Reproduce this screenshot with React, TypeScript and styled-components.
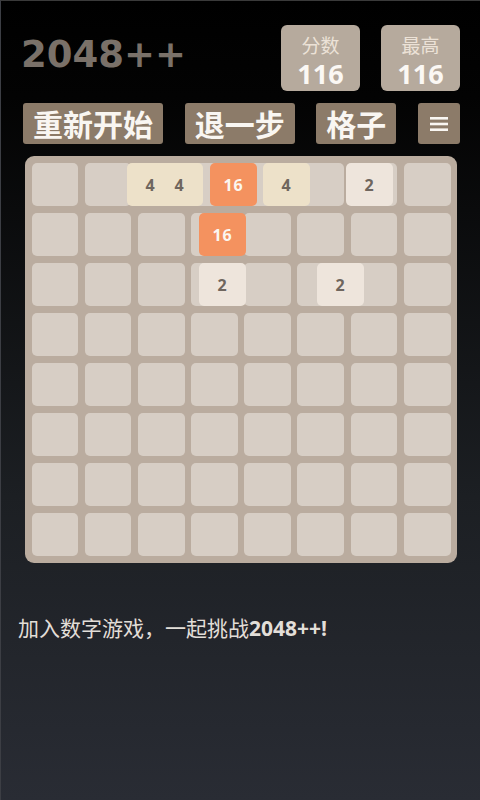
import React from "react";
import styled, { createGlobalStyle } from "styled-components";

const GlobalStyle = createGlobalStyle`
  html, body { margin: 0; padding: 0; }
  body {
    background: #000;
    font-family: "Open Sans", "Noto Sans CJK SC", sans-serif;
  }
`;

const Page = styled.div`
  box-sizing: border-box;
  width: 480px;
  min-height: 800px;
  padding: 24px 20px 0 22px;
  border-top: 1px solid #3a3a3a;
  border-left: 1px solid #3c3e44;
  background: linear-gradient(180deg, #000 0%, #030303 12%, #1c1f23 62%, #292c34 100%);
  display: flex;
  flex-direction: column;
`;

const Header = styled.div`
  display: flex;
  align-items: center;
  justify-content: space-between;
`;

const Title = styled.h1`
  margin: 0 0 0 -2px;
  font-family: "DejaVu Sans", sans-serif;
  font-weight: bold;
  font-size: 37px;
  line-height: 40px;
  color: #7a7169;
  position: relative;
  top: -3px;
`;

const Scores = styled.div`
  display: flex;
  gap: 21px;
`;

const ScoreBox = styled.div`
  width: 79px;
  height: 66px;
  box-sizing: border-box;
  padding-top: 9px;
  border-radius: 6px;
  background: #b6aa9d;
  display: flex;
  flex-direction: column;
  align-items: center;
`;

const ScoreLabel = styled.div`
  font-family: "Noto Sans CJK SC", sans-serif;
  font-size: 19px;
  line-height: 22px;
  color: #ece2d7;
`;

const ScoreValue = styled.div`
  margin-top: 3px;
  font-family: "Open Sans", sans-serif;
  font-weight: 700;
  font-size: 27px;
  line-height: 30px;
  color: #fbf8f4;
`;

const Toolbar = styled.div`
  display: flex;
  justify-content: space-between;
  margin-top: 12px;
`;

const Button = styled.div`
  height: 41px;
  padding: 0 10px;
  box-sizing: border-box;
  border-radius: 3px;
  background: #8c7b69;
  color: #f9f6f2;
  font-family: "Noto Sans CJK SC", sans-serif;
  font-weight: 700;
  font-size: 30px;
  line-height: 41px;
  display: flex;
  align-items: center;
  justify-content: center;
  white-space: nowrap;
`;

const IconButton = styled(Button)`
  width: 42px;
  padding: 0;
`;

const Board = styled.div`
  position: relative;
  margin: 12px 3px 0 2px;
  height: 407px;
  box-sizing: border-box;
  border-radius: 9px;
  background: #baac9f;
  padding: 7px 6.5px;
  display: grid;
  grid-template-columns: repeat(8, 1fr);
  grid-template-rows: repeat(8, 1fr);
  column-gap: 6.4px;
  row-gap: 7px;
`;

const Cell = styled.div`
  border-radius: 5px;
  background: #d7cec5;
`;

const tileColors: Record<number, { bg: string; fg: string }> = {
  2: { bg: "#eee5dc", fg: "#6f665e" },
  4: { bg: "#ede1c9", fg: "#6f665e" },
  16: { bg: "#f4925f", fg: "#fbf6f0" },
};

const Tile = styled.div.attrs<{ $x: number; $y: number }>((p) => ({
  style: { left: `${p.$x}px`, top: `${p.$y}px` },
}))<{ $x: number; $y: number; $v: number }>`
  position: absolute;
  width: 47px;
  height: 43px;
  border-radius: 5px;
  background: ${(p) => tileColors[p.$v].bg};
  color: ${(p) => tileColors[p.$v].fg};
  font-family: "Open Sans", sans-serif;
  font-weight: 700;
  font-size: 16px;
  letter-spacing: 0.8px;
  display: flex;
  align-items: center;
  justify-content: center;
`;

const Footer = styled.p`
  margin: 49px 0 0 -5px;
  font-family: "Noto Sans CJK SC", sans-serif;
  font-size: 21px;
  line-height: 30px;
  color: #e2ded8;
  b {
    font-family: "Open Sans", sans-serif;
    font-weight: 700;
  }
`;

const tiles = [
  { v: 4, x: 102, y: 7 },
  { v: 4, x: 131, y: 7 },
  { v: 16, x: 185, y: 7 },
  { v: 4, x: 238, y: 7 },
  { v: 2, x: 321, y: 7 },
  { v: 16, x: 174, y: 57 },
  { v: 2, x: 174, y: 107 },
  { v: 2, x: 292, y: 107 },
];

const MenuIcon = () => (
  <svg width="18" height="14" viewBox="0 0 18 14">
    <rect x="0" y="0" width="18" height="2.6" fill="#f9f6f2" />
    <rect x="0" y="5.7" width="18" height="2.6" fill="#f9f6f2" />
    <rect x="0" y="11.4" width="18" height="2.6" fill="#f9f6f2" />
  </svg>
);

export default function App() {
  return (
    <>
      <GlobalStyle />
      <Page>
        <Header>
          <Title>2048++</Title>
          <Scores>
            <ScoreBox>
              <ScoreLabel>分数</ScoreLabel>
              <ScoreValue>116</ScoreValue>
            </ScoreBox>
            <ScoreBox>
              <ScoreLabel>最高</ScoreLabel>
              <ScoreValue>116</ScoreValue>
            </ScoreBox>
          </Scores>
        </Header>
        <Toolbar>
          <Button>重新开始</Button>
          <Button>退一步</Button>
          <Button>格子</Button>
          <IconButton>
            <MenuIcon />
          </IconButton>
        </Toolbar>
        <Board>
          {Array.from({ length: 64 }, (_, i) => (
            <Cell key={i} />
          ))}
          {tiles.map((t, i) => (
            <Tile key={i} $v={t.v} $x={t.x} $y={t.y}>
              {t.v}
            </Tile>
          ))}
        </Board>
        <Footer>
          加入数字游戏，一起挑战<b>2048++!</b>
        </Footer>
      </Page>
    </>
  );
}
